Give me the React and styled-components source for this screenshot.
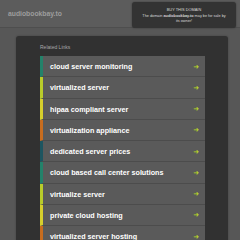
import React from "react";
import styled, { createGlobalStyle } from "styled-components";

const GlobalStyle = createGlobalStyle`
  html, body {
    margin: 0;
    padding: 0;
    background: #575757;
    font-family: "Liberation Sans", Arial, sans-serif;
  }
`;

const links = [
  { label: "cloud server monitoring", color: "#23826a" },
  { label: "virtualized server", color: "#b9cc2a" },
  { label: "hipaa compliant server", color: "#d6cf2c" },
  { label: "virtualization appliance", color: "#c86d1f" },
  { label: "dedicated server prices", color: "#1d5560" },
  { label: "cloud based call center solutions", color: "#23826a" },
  { label: "virtualize server", color: "#b9cc2a" },
  { label: "private cloud hosting", color: "#d6cf2c" },
  { label: "virtualized server hosting", color: "#c86d1f" },
];

const App = () => {
  return (
    <>
      <GlobalStyle />
      <Page>
        <Header>
          <SiteName>audiobookbay.to</SiteName>
        </Header>
        <BuyBox>
          <BuyTitle>BUY THIS DOMAIN</BuyTitle>
          <BuyText>
            The domain <b>audiobookbay.to</b> may be for sale by
            <br />
            its owner!
          </BuyText>
        </BuyBox>
        <Panel>
          <PanelTitle>Related Links</PanelTitle>
          <LinkList>
            {links.map((l) => (
              <LinkRow key={l.label} $bar={l.color}>
                <LinkLabel>{l.label}</LinkLabel>
                <Arrow>➜</Arrow>
              </LinkRow>
            ))}
          </LinkList>
        </Panel>
      </Page>
    </>
  );
};

export default App;

const Page = styled.div`
  position: relative;
  width: 240px;
  height: 240px;
  overflow: hidden;
`;

const Header = styled.div`
  height: 28px;
  background: #5c5c5c;
  border-bottom: 1px solid #4e4e4e;
  padding-left: 8px;
  display: flex;
  align-items: center;
  box-sizing: border-box;
`;

const SiteName = styled.div`
  color: #9c9c9c;
  font-size: 6.8px;
  font-weight: bold;
  margin-top: -1px;
`;

const BuyBox = styled.div`
  position: absolute;
  top: 2px;
  right: 4px;
  width: 104px;
  height: 26px;
  box-sizing: border-box;
  background: #333333;
  border-radius: 3px;
  box-shadow: 0 0 2px rgba(0, 0, 0, 0.4);
  color: #d8d8d8;
  text-align: center;
  padding: 5px 2px 0;
  white-space: nowrap;
`;

const BuyTitle = styled.div`
  font-size: 3.9px;
  line-height: 5.5px;
`;

const BuyText = styled.div`
  font-size: 3.8px;
  line-height: 5.5px;
  margin-top: 1px;
`;

const Panel = styled.div`
  margin: 8px 12px 0 16px;
  background: #313131;
  border-radius: 3px;
  padding: 8px 23px 0 24px;
  height: 220px;
  box-shadow: 0 0 2px rgba(0, 0, 0, 0.3);
`;

const PanelTitle = styled.div`
  color: #a8a8a8;
  font-size: 5px;
  line-height: 6px;
  margin-bottom: 6px;
`;

const LinkList = styled.div`
  display: flex;
  flex-direction: column;
`;

const LinkRow = styled.div`
  display: flex;
  align-items: center;
  justify-content: space-between;
  height: 21.25px;
  box-sizing: border-box;
  background: #5a5a5a;
  border-left: 3px solid ${(p) => p.$bar};
  border-bottom: 1px solid #4c4c4c;
  padding: 1px 6px 0 7px;
`;

const LinkLabel = styled.span`
  color: #ffffff;
  font-size: 7.2px;
  font-weight: bold;
`;

const Arrow = styled.span`
  color: #b8d42a;
  font-size: 7px;
  font-weight: bold;
  font-family: "DejaVu Sans", sans-serif;
`;
